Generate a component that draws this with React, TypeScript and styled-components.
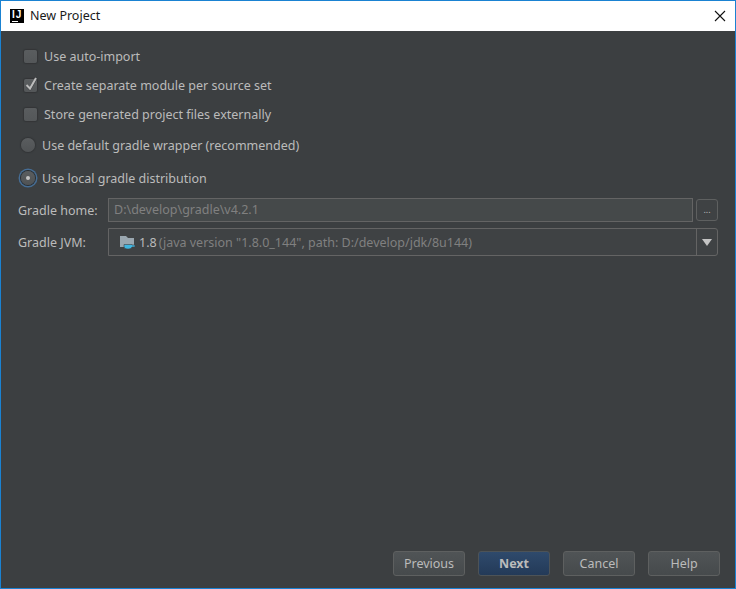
import React from 'react'
import styled, { createGlobalStyle } from 'styled-components'

const GlobalStyle = createGlobalStyle`
  html, body { margin: 0; padding: 0; background: #3c3f41; }
  * { box-sizing: border-box; }
`

const Window = styled.div`
  width: 736px;
  height: 589px;
  display: flex;
  flex-direction: column;
  border: 1px solid #1a82d2;
  font-family: "Noto Sans", "Open Sans", sans-serif;
  font-size: 12.5px;
  color: #bbbbbb;
  overflow: hidden;
`

const TitleBar = styled.div`
  height: 30px;
  flex: none;
  background: #ffffff;
  display: flex;
  align-items: center;
  padding: 0 9px 1px 9px;
  color: #1a1a1a;
`

const TitleLogo = styled.div`
  width: 14px;
  height: 14px;
  background: #000000;
  color: #fff;
  font-family: "Liberation Sans", sans-serif;
  font-size: 10px;
  font-weight: 700;
  line-height: 9px;
  padding: 1px 0 0 2px;
  letter-spacing: 1px;
  position: relative;
  margin-right: 6px;
  overflow: hidden;
  &::after {
    content: '';
    position: absolute;
    left: 2px;
    bottom: 1px;
    width: 6px;
    height: 1px;
    background: #fff;
  }
`

const TitleText = styled.div`
  flex: 1;
`

const Body = styled.div`
  flex: 1;
  background: #3c3f41;
  display: flex;
  flex-direction: column;
  padding: 11px 15px 0 17px;
`

const Options = styled.div`
  display: flex;
  flex-direction: column;
`

const OptionRow = styled.div<{ $height: number; $indent: number }>`
  height: ${({ $height }) => $height}px;
  display: flex;
  align-items: center;
  padding-left: ${({ $indent }) => $indent}px;
  white-space: nowrap;
`

const CheckBox = styled.div`
  width: 13px;
  height: 13px;
  border-radius: 2px;
  background: linear-gradient(#5a5d5f, #545759);
  box-shadow: 0 0 1px 1px #333537;
  margin-right: 7px;
  position: relative;
  flex: none;
`

const CheckMark = styled.svg`
  position: absolute;
  left: 0;
  top: -3px;
`

const Radio = styled.div<{ $focused?: boolean }>`
  width: 14px;
  height: 14px;
  border-radius: 50%;
  background: linear-gradient(#5a5d5f, #505355);
  margin-right: 7px;
  flex: none;
  display: flex;
  align-items: center;
  justify-content: center;
  box-shadow: ${({ $focused }) =>
    $focused ? '0 0 0 1px #2b2d2f, 0 0 0 2.5px #466d94' : '0 0 1px 1px #333537'};
  &::after {
    content: '';
    display: ${({ $focused }) => ($focused ? 'block' : 'none')};
    width: 4px;
    height: 4px;
    border-radius: 50%;
    background: #c4c4c4;
  }
`

const FormRow = styled.div<{ $top: number }>`
  display: flex;
  align-items: center;
  margin-top: ${({ $top }) => $top}px;
`

const FieldLabel = styled.div`
  width: 90px;
  flex: none;
`

const TextField = styled.div`
  width: 585px;
  height: 24px;
  background: #45494a;
  border: 1px solid #646464;
  color: #808080;
  padding-left: 5px;
  line-height: 21px;
  flex: none;
`

const BrowseButton = styled.div`
  width: 22px;
  height: 22px;
  margin-left: 3px;
  border: 1px solid #5e6060;
  border-radius: 3px;
  background: #3f4244;
  color: #bbbbbb;
  font-size: 9px;
  text-align: center;
  line-height: 20px;
  flex: none;
`

const Combo = styled.div`
  width: 610px;
  height: 28px;
  border: 1px solid #646464;
  border-radius: 0 3px 3px 0;
  background: #3f4244;
  display: flex;
  align-items: center;
  flex: none;
`

const ComboValue = styled.div`
  flex: 1;
  display: flex;
  align-items: center;
  padding-left: 11px;
  white-space: nowrap;
`

const JdkVersion = styled.span`
  margin-left: 3px;
  color: #bbbbbb;
`

const JdkPath = styled.span`
  margin-left: 2px;
  color: #808080;
`

const ComboArrow = styled.div`
  width: 21px;
  height: 100%;
  border-left: 1px solid #646464;
  display: flex;
  align-items: center;
  justify-content: center;
  flex: none;
`

const Footer = styled.div`
  margin-top: auto;
  display: flex;
  justify-content: flex-end;
  gap: 13px;
  padding-bottom: 12px;
`

const Button = styled.div<{ $primary?: boolean }>`
  width: 72px;
  height: 25px;
  border-radius: 3px;
  border: 1px solid ${({ $primary }) => ($primary ? '#4d5357' : '#5e6060')};
  background: ${({ $primary }) =>
    $primary ? 'linear-gradient(#2f4a6c, #233a58)' : 'linear-gradient(#505456, #464a4c)'};
  color: #bbbbbb;
  font-weight: ${({ $primary }) => ($primary ? 700 : 400)};
  text-align: center;
  line-height: 23px;
`

const App: React.FC = () => {
  return (
    <Window>
      <GlobalStyle />
      <TitleBar>
        <TitleLogo>IJ</TitleLogo>
        <TitleText>New Project</TitleText>
        <svg width="12" height="12" viewBox="0 0 12 12">
          <path d="M1 1 L11 11 M11 1 L1 11" stroke="#111" strokeWidth="1.1" fill="none" />
        </svg>
      </TitleBar>
      <Body>
        <Options>
          <OptionRow $height={29} $indent={6}>
            <CheckBox />
            <span>Use auto-import</span>
          </OptionRow>
          <OptionRow $height={29} $indent={6}>
            <CheckBox>
              <CheckMark width="14" height="16" viewBox="0 0 14 16">
                <path d="M2.5 9.5 L6 13 L12 2.5" stroke="#2f3133" strokeWidth="2.6" fill="none" opacity="0.6" />
                <path d="M2.5 9 L6 12.5 L12 2" stroke="#bdbdbd" strokeWidth="2" fill="none" />
              </CheckMark>
            </CheckBox>
            <span>Create separate module per source set</span>
          </OptionRow>
          <OptionRow $height={29} $indent={6}>
            <CheckBox />
            <span>Store generated project files externally</span>
          </OptionRow>
          <OptionRow $height={32} $indent={3}>
            <Radio />
            <span>Use default gradle wrapper (recommended)</span>
          </OptionRow>
          <OptionRow $height={34} $indent={3}>
            <Radio $focused />
            <span>Use local gradle distribution</span>
          </OptionRow>
        </Options>
        <FormRow $top={3}>
          <FieldLabel>Gradle home:</FieldLabel>
          <TextField>D:\develop\gradle\v4.2.1</TextField>
          <BrowseButton>...</BrowseButton>
        </FormRow>
        <FormRow $top={6}>
          <FieldLabel>Gradle JVM:</FieldLabel>
          <Combo>
            <ComboValue>
              <svg width="16" height="14" viewBox="0 0 16 14">
                <path d="M0 1 H6 L8 3 H14 V12 H0 Z" fill="#9aa7b0" />
                <path d="M4 9.5 H12 V10 H15 V12 H12 Q11.5 14 9 14 H7 Q4 14 4 11.5 Z" fill="#40b6e0" stroke="#3f4244" strokeWidth="0.6" />
              </svg>
              <JdkVersion>1.8</JdkVersion>
              <JdkPath>(java version "1.8.0_144", path: D:/develop/jdk/8u144)</JdkPath>
            </ComboValue>
            <ComboArrow>
              <svg width="10" height="7" viewBox="0 0 10 7">
                <path d="M0 0 H10 L5 7 Z" fill="#c4c4c4" />
              </svg>
            </ComboArrow>
          </Combo>
        </FormRow>
        <Footer>
          <Button>Previous</Button>
          <Button $primary>Next</Button>
          <Button>Cancel</Button>
          <Button>Help</Button>
        </Footer>
      </Body>
    </Window>
  )
}

export default App
